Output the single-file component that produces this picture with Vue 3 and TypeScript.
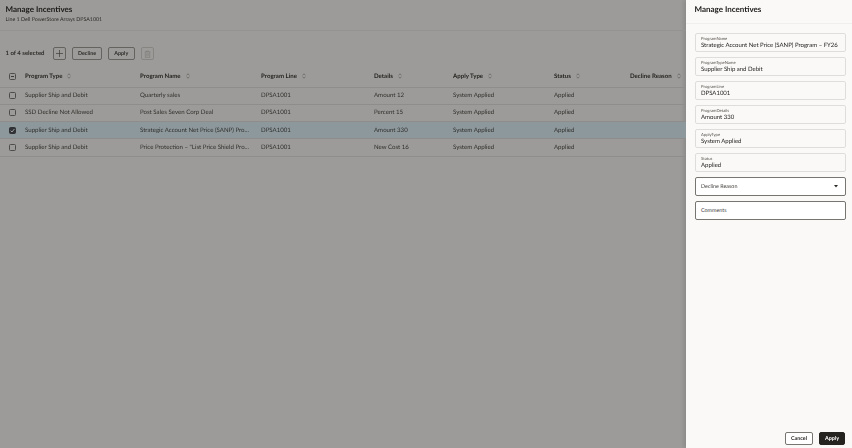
<script setup lang="ts">
interface Row { type: string; name: string; line: string; details: string; apply: string; status: string; selected?: boolean }
const columns = ['Program Type', 'Program Name', 'Program Line', 'Details', 'Apply Type', 'Status', 'Decline Reason']
const rows: Row[] = [
  { type: 'Supplier Ship and Debit', name: 'Quarterly sales', line: 'DPSA1001', details: 'Amount 12', apply: 'System Applied', status: 'Applied' },
  { type: 'SSD Decline Not Allowed', name: 'Post Sales Seven Corp Deal', line: 'DPSA1001', details: 'Percent 15', apply: 'System Applied', status: 'Applied' },
  { type: 'Supplier Ship and Debit', name: 'Strategic Account Net Price (SANP) Pro...', line: 'DPSA1001', details: 'Amount 330', apply: 'System Applied', status: 'Applied', selected: true },
  { type: 'Supplier Ship and Debit', name: 'Price Protection – "List Price Shield Pro...', line: 'DPSA1001', details: 'New Cost 16', apply: 'System Applied', status: 'Applied' },
]
const fields = [
  { label: 'ProgramName', value: 'Strategic Account Net Price (SANP) Program – FY26' },
  { label: 'ProgramTypeName', value: 'Supplier Ship and Debit' },
  { label: 'ProgramLine', value: 'DPSA1001' },
  { label: 'ProgramDetails', value: 'Amount 330' },
  { label: 'ApplyType', value: 'System Applied' },
  { label: 'Status', value: 'Applied' },
]
</script>

<template>
  <div class="page">
    <main class="main">
      <header class="head">
        <h1>Manage Incentives</h1>
        <p>Line 1 Dell PowerStore Arrays DPSA1001</p>
      </header>
      <div class="toolbar">
        <span class="count">1 of 4 selected</span>
        <button class="btn icon"><svg width="7" height="7" viewBox="0 0 7 7"><path d="M3.5 0v7M0 3.5h7" stroke="#3c3b38" stroke-width=".7" fill="none"/></svg></button>
        <button class="btn decline">Decline</button>
        <button class="btn apply">Apply</button>
        <button class="btn icon off"><svg width="7" height="8" viewBox="0 0 8 9"><path d="M.8 2h6.4M3 2V1h2v1M1.5 2v6.4h5V2M3.2 3.5v3.4M4.8 3.5v3.4" stroke="#767572" stroke-width=".6" fill="none"/></svg></button>
      </div>
      <div class="table">
        <div class="row header">
          <span class="check"><span class="box"><i class="dash"></i></span></span>
          <span v-for="c in columns" :key="c" class="cell">{{ c }}
            <svg class="sort" width="4" height="6" viewBox="0 0 5 7"><path d="M.7 2.4 2.5.8l1.8 1.6M.7 4.6l1.8 1.6 1.8-1.6" stroke="#4a4946" stroke-width=".7" fill="none"/></svg>
          </span>
        </div>
        <div v-for="(r, i) in rows" :key="i" class="row" :class="{ selected: r.selected }">
          <span class="check">
            <span class="box" :class="{ on: r.selected }">
              <svg v-if="r.selected" width="5" height="5" viewBox="0 0 5 5"><path d="M.6 2.7 2 4 4.4 1" stroke="#b8bdbf" stroke-width=".8" fill="none"/></svg>
            </span>
          </span>
          <span class="cell">{{ r.type }}</span>
          <span class="cell">{{ r.name }}</span>
          <span class="cell">{{ r.line }}</span>
          <span class="cell">{{ r.details }}</span>
          <span class="cell">{{ r.apply }}</span>
          <span class="cell">{{ r.status }}</span>
          <span class="cell"></span>
        </div>
      </div>
    </main>
    <aside class="drawer">
      <h2><span>Manage Incentives</span></h2>
      <div class="form">
        <div v-for="f in fields" :key="f.label" class="field">
          <span class="label">{{ f.label }}</span>
          <span class="value">{{ f.value }}</span>
        </div>
        <div class="input">
          <span>Decline Reason</span>
          <svg width="4" height="2.5" viewBox="0 0 5 3"><path d="M0 0h5L2.5 3z" fill="#2a2926"/></svg>
        </div>
        <div class="input"><span>Comments</span></div>
      </div>
      <footer class="actions">
        <button class="cancel">Cancel</button>
        <button class="primary">Apply</button>
      </footer>
    </aside>
  </div>
</template>

<style scoped>
.page { width: 852px; height: 448px; display: flex; overflow: hidden; background: #9c9b99; font-family: Lato, "Open Sans", sans-serif; color: #2a2926; text-rendering: geometricPrecision; }
.main { flex: 1; min-width: 0; display: flex; flex-direction: column; }
.head { height: 31px; padding: 4px 5.5px 0; border-bottom: 1px solid #949391; box-sizing: border-box; }
h1, h2 { margin: 0; font-size: 8px; line-height: 10px; font-weight: 700; color: #1c1b19; }
.head p { margin: 2.5px 0 0; font-size: 5.3px; line-height: 6px; color: #2e2d2a; }
.head, .toolbar, .table, h2 span, .form, .actions { filter: blur(.3px); }
.toolbar { display: flex; align-items: center; padding: 16px 0 0 5.5px; height: 13px; }
.count { font-size: 6px; font-weight: 700; color: #2e2d2a; width: 47.5px; }
.btn { box-sizing: border-box; height: 13px; background: transparent; border: 1px solid #64635f; border-radius: 2px; font: 700 5.4px Lato, sans-serif; color: #2e2d2a; padding: 0; display: flex; align-items: center; justify-content: center; text-rendering: geometricPrecision; }
.icon { width: 13px; }
.decline { width: 30px; margin-left: 6px; }
.apply { width: 26.5px; margin-left: 6px; }
.off { margin-left: 6px; border-color: #868582; }
.table { margin-top: 7px; width: 686px; }
.row { display: grid; grid-template-columns: 25px 115px 121px 113px 79px 101px 76px 56px; align-items: center; height: 17.33px; box-sizing: border-box; border-bottom: 1px solid #8e8d8b; font-size: 6.1px; color: #302f2c; }
.row.header { height: 20.5px; font-weight: 700; color: #252421; font-size: 6.1px; }
.row.selected { background: #8d989c; }
.check { display: flex; justify-content: center; padding-right: 1px; }
.box { box-sizing: border-box; width: 7px; height: 7px; border: 1px solid #4d4c49; border-radius: 1.5px; display: flex; align-items: center; justify-content: center; }
.box.on { background: #2f3134; border-color: #2f3134; }
.dash { width: 3px; height: 1px; background: #3c3b38; }
.cell { white-space: nowrap; overflow: hidden; }
.sort { margin-left: 3.5px; vertical-align: -1px; }
.drawer { width: 166px; flex: none; background: #fbf9f8; display: flex; flex-direction: column; box-shadow: -2px 0 4px rgba(0, 0, 0, .12); }
h2 { padding: 4px 0 0 8.5px; height: 24px; box-sizing: border-box; border-bottom: 1px solid #f1efed; }
h2 span { display: block; }
.form { display: flex; flex-direction: column; gap: 5px; padding: 9px 6.5px 0 9px; flex: 1; }
.field { box-sizing: border-box; height: 19px; border: 1px solid #dfdddb; border-radius: 2px; padding: 2.5px 5px 0; display: flex; flex-direction: column; }
.label { font-size: 4.2px; line-height: 4.5px; color: #57554f; }
.value { font-size: 6px; line-height: 8px; margin-top: .5px; color: #1f1e1b; white-space: nowrap; }
.input { box-sizing: border-box; height: 19px; background: #fff; border: 1px solid #77756f; border-radius: 2px; padding: 0 7px 0 5px; display: flex; align-items: center; justify-content: space-between; font-size: 5.4px; color: #45433f; }
.actions { display: flex; justify-content: flex-end; gap: 6px; padding: 0 7px 3px 0; }
.actions button { box-sizing: border-box; height: 13px; border-radius: 2px; font: 700 5.4px Lato, sans-serif; padding: 0; text-rendering: geometricPrecision; }
.cancel { width: 28px; background: #fff; border: 1px solid #77756f; color: #2e2d2a; }
.primary { width: 26px; background: #252320; border: 1px solid #252320; color: #fff; }
</style>
